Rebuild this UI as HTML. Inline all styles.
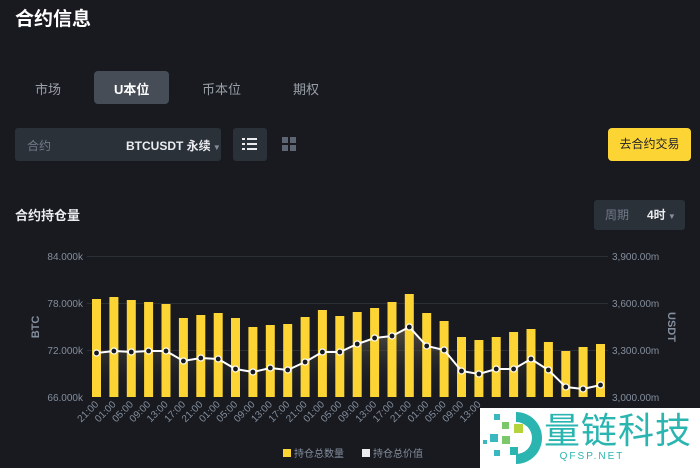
<!DOCTYPE html>
<html><head><meta charset="utf-8"><style>
body{margin:0;width:700px;height:468px;background:#181a20;overflow:hidden;font-family:"Liberation Sans","Noto Sans CJK SC",sans-serif;position:relative;color:#eaecef}
.a{position:absolute}
</style></head><body>
<div class="a" style="left:15px;top:4px;font-size:19px;font-weight:bold;color:#fff">合约信息</div>
<div class="a" style="left:35px;top:79px;font-size:13px;color:#9aa0a8">市场</div>
<div class="a" style="left:94px;top:71px;width:75px;height:33px;background:#474d57;border-radius:4px"></div>
<div class="a" style="left:114px;top:79px;font-size:13px;font-weight:bold;color:#fff">U本位</div>
<div class="a" style="left:202px;top:79px;font-size:13px;color:#9aa0a8">币本位</div>
<div class="a" style="left:293px;top:79px;font-size:13px;color:#9aa0a8">期权</div>
<div class="a" style="left:15px;top:128px;width:206px;height:33px;background:#2b3139;border-radius:3px"></div>
<div class="a" style="left:27px;top:137px;font-size:12px;color:#707a8a">合约</div>
<div class="a" style="left:126px;top:137px;font-size:12px;font-weight:bold;color:#eaecef">BTCUSDT 永续<span style="color:#848e9c;font-size:8px;font-weight:normal"> ▼</span></div>
<div class="a" style="left:233px;top:128px;width:34px;height:33px;background:#2b3139;border-radius:3px"></div>
<svg class="a" style="left:242px;top:137px" width="16" height="14"><g fill="#eaecef"><rect x="0" y="1" width="3" height="2"/><rect x="5" y="1" width="10" height="2"/><rect x="0" y="6" width="3" height="2"/><rect x="5" y="6" width="10" height="2"/><rect x="0" y="11" width="3" height="2"/><rect x="5" y="11" width="10" height="2"/></g></svg>
<svg class="a" style="left:282px;top:137px" width="14" height="14"><g fill="#5e6673"><rect x="0" y="0" width="6" height="6"/><rect x="8" y="0" width="6" height="6"/><rect x="0" y="8" width="6" height="6"/><rect x="8" y="8" width="6" height="6"/></g></svg>
<div class="a" style="left:608px;top:128px;width:83px;height:33px;background:#fcd535;border-radius:4px;color:#1e2026;font-size:12px;line-height:33px;text-align:center">去合约交易</div>
<div class="a" style="left:15px;top:205px;font-size:13px;font-weight:bold;color:#eaecef">合约持仓量</div>
<div class="a" style="left:594px;top:200px;width:91px;height:30px;background:#2b3139;border-radius:3px"></div>
<div class="a" style="left:605px;top:206px;font-size:12px;color:#707a8a">周期</div>
<div class="a" style="left:647px;top:206px;font-size:12px;font-weight:bold;color:#eaecef">4时<span style="color:#848e9c;font-size:8px;font-weight:normal"> ▼</span></div>
<svg class="a" style="left:0;top:0" width="700" height="468" font-family="Liberation Sans, Noto Sans CJK SC, sans-serif">
<defs><linearGradient id="g" x1="0" y1="0" x2="0" y2="1"><stop offset="0" stop-color="#6b6450" stop-opacity=".7"/><stop offset="1" stop-color="#181a20" stop-opacity="0"/></linearGradient></defs>
<g stroke="#2b2f36" stroke-width="1"><line x1="87" y1="256.5" x2="608" y2="256.5"/><line x1="87" y1="303.5" x2="608" y2="303.5"/><line x1="87" y1="350.5" x2="608" y2="350.5"/></g>
<g font-size="10" fill="#848e9c" text-anchor="end"><text x="83" y="260">84.000k</text><text x="83" y="307">78.000k</text><text x="83" y="354">72.000k</text><text x="83" y="401">66.000k</text></g>
<g font-size="10" fill="#848e9c"><text x="612" y="260">3,900.00m</text><text x="612" y="307">3,600.00m</text><text x="612" y="354">3,300.00m</text><text x="612" y="401">3,000.00m</text></g>
<text x="0" y="0" transform="translate(39,327) rotate(-90)" font-size="11" font-weight="bold" fill="#848e9c" text-anchor="middle">BTC</text>
<text x="0" y="0" transform="translate(668,327) rotate(90)" font-size="11" font-weight="bold" fill="#848e9c" text-anchor="middle">USDT</text>
<polygon fill="url(#g)" points="96.5,397 96.5,353 113.9,351 131.3,352 148.6,351 166,351 183.4,361 200.8,358 218.2,359 235.5,369 252.9,372 270.3,368 287.7,370 305.1,362 322.4,352 339.8,352 357.2,344 374.6,338 392,336 409.3,327 426.7,346 444.1,350 461.5,371 478.9,374 496.2,369 513.6,369 531,359 548.4,370 565.8,387 583.1,389 600.5,385 600.5,397"/>
<g fill="#fcd535">
<rect x="92" y="299" width="9" height="98"/><rect x="109.4" y="297" width="9" height="100"/><rect x="126.8" y="300" width="9" height="97"/><rect x="144.1" y="302" width="9" height="95"/><rect x="161.5" y="304" width="9" height="93"/><rect x="178.9" y="318" width="9" height="79"/><rect x="196.3" y="315" width="9" height="82"/><rect x="213.7" y="313" width="9" height="84"/><rect x="231" y="318" width="9" height="79"/><rect x="248.4" y="327" width="9" height="70"/><rect x="265.8" y="325" width="9" height="72"/><rect x="283.2" y="324" width="9" height="73"/><rect x="300.6" y="317" width="9" height="80"/><rect x="317.9" y="310" width="9" height="87"/><rect x="335.3" y="316" width="9" height="81"/><rect x="352.7" y="312" width="9" height="85"/><rect x="370.1" y="308" width="9" height="89"/><rect x="387.5" y="302" width="9" height="95"/><rect x="404.8" y="294" width="9" height="103"/><rect x="422.2" y="313" width="9" height="84"/><rect x="439.6" y="321" width="9" height="76"/><rect x="457" y="337" width="9" height="60"/><rect x="474.4" y="340" width="9" height="57"/><rect x="491.7" y="337" width="9" height="60"/><rect x="509.1" y="332" width="9" height="65"/><rect x="526.5" y="329" width="9" height="68"/><rect x="543.9" y="342" width="9" height="55"/><rect x="561.3" y="351" width="9" height="46"/><rect x="578.6" y="347" width="9" height="50"/><rect x="596" y="344" width="9" height="53"/>
</g>
<polyline fill="none" stroke="#fff" stroke-width="2" points="96.5,353 113.9,351 131.3,352 148.6,351 166,351 183.4,361 200.8,358 218.2,359 235.5,369 252.9,372 270.3,368 287.7,370 305.1,362 322.4,352 339.8,352 357.2,344 374.6,338 392,336 409.3,327 426.7,346 444.1,350 461.5,371 478.9,374 496.2,369 513.6,369 531,359 548.4,370 565.8,387 583.1,389 600.5,385"/>
<g fill="#181a20" stroke="#fff" stroke-width="1.2">
<circle cx="96.5" cy="353" r="3"/><circle cx="113.9" cy="351" r="3"/><circle cx="131.3" cy="352" r="3"/><circle cx="148.6" cy="351" r="3"/><circle cx="166" cy="351" r="3"/><circle cx="183.4" cy="361" r="3"/><circle cx="200.8" cy="358" r="3"/><circle cx="218.2" cy="359" r="3"/><circle cx="235.5" cy="369" r="3"/><circle cx="252.9" cy="372" r="3"/><circle cx="270.3" cy="368" r="3"/><circle cx="287.7" cy="370" r="3"/><circle cx="305.1" cy="362" r="3"/><circle cx="322.4" cy="352" r="3"/><circle cx="339.8" cy="352" r="3"/><circle cx="357.2" cy="344" r="3"/><circle cx="374.6" cy="338" r="3"/><circle cx="392" cy="336" r="3"/><circle cx="409.3" cy="327" r="3"/><circle cx="426.7" cy="346" r="3"/><circle cx="444.1" cy="350" r="3"/><circle cx="461.5" cy="371" r="3"/><circle cx="478.9" cy="374" r="3"/><circle cx="496.2" cy="369" r="3"/><circle cx="513.6" cy="369" r="3"/><circle cx="531" cy="359" r="3"/><circle cx="548.4" cy="370" r="3"/><circle cx="565.8" cy="387" r="3"/><circle cx="583.1" cy="389" r="3"/><circle cx="600.5" cy="385" r="3"/>
</g>
<g font-size="10" fill="#848e9c" text-anchor="end">
<text transform="translate(99,405) rotate(-45)">21:00</text><text transform="translate(116.4,405) rotate(-45)">01:00</text><text transform="translate(133.8,405) rotate(-45)">05:00</text><text transform="translate(151.1,405) rotate(-45)">09:00</text><text transform="translate(168.5,405) rotate(-45)">13:00</text><text transform="translate(185.9,405) rotate(-45)">17:00</text><text transform="translate(203.3,405) rotate(-45)">21:00</text><text transform="translate(220.7,405) rotate(-45)">01:00</text><text transform="translate(238,405) rotate(-45)">05:00</text><text transform="translate(255.4,405) rotate(-45)">09:00</text><text transform="translate(272.8,405) rotate(-45)">13:00</text><text transform="translate(290.2,405) rotate(-45)">17:00</text><text transform="translate(307.6,405) rotate(-45)">21:00</text><text transform="translate(324.9,405) rotate(-45)">01:00</text><text transform="translate(342.3,405) rotate(-45)">05:00</text><text transform="translate(359.7,405) rotate(-45)">09:00</text><text transform="translate(377.1,405) rotate(-45)">13:00</text><text transform="translate(394.5,405) rotate(-45)">17:00</text><text transform="translate(411.8,405) rotate(-45)">21:00</text><text transform="translate(429.2,405) rotate(-45)">01:00</text><text transform="translate(446.6,405) rotate(-45)">05:00</text><text transform="translate(464,405) rotate(-45)">09:00</text><text transform="translate(481.4,405) rotate(-45)">13:00</text>
</g>
<rect x="283" y="449" width="8" height="8" fill="#fcd535"/>
<text x="294" y="457" font-size="10" fill="#848e9c">持仓总数量</text>
<rect x="362" y="449" width="8" height="8" fill="#eaecef"/>
<text x="373" y="457" font-size="10" fill="#848e9c">持仓总价值</text>
<rect x="480" y="408" width="220" height="60" fill="#fff"/>
<g fill="#2bb5b0"><path d="M516,412 a25,25 0 0 1 0,52 l0,-10 a15,15 0 0 0 0,-32 z"/></g>
<g><rect x="494" y="414" width="6" height="6" fill="#3ab8c0"/><rect x="502" y="422" width="7" height="7" fill="#7ac86a"/><rect x="514" y="424" width="9" height="9" fill="#b5d33a"/><rect x="490" y="434" width="8" height="8" fill="#3ab8c0"/><rect x="502" y="436" width="8" height="8" fill="#7ac86a"/><rect x="510" y="447" width="8" height="8" fill="#2bb5b0"/><rect x="494" y="450" width="6" height="6" fill="#3ab8c0"/><rect x="483" y="440" width="4" height="4" fill="#3ab8c0"/></g>
<text x="544" y="443" font-size="36" fill="#2bb5b0" font-family="Noto Sans CJK SC, sans-serif" letter-spacing="1">量链科技</text>
<text x="592" y="459" font-size="10" fill="#2bb5b0" letter-spacing="2" text-anchor="middle">QFSP.NET</text>
</svg>
</body></html>
